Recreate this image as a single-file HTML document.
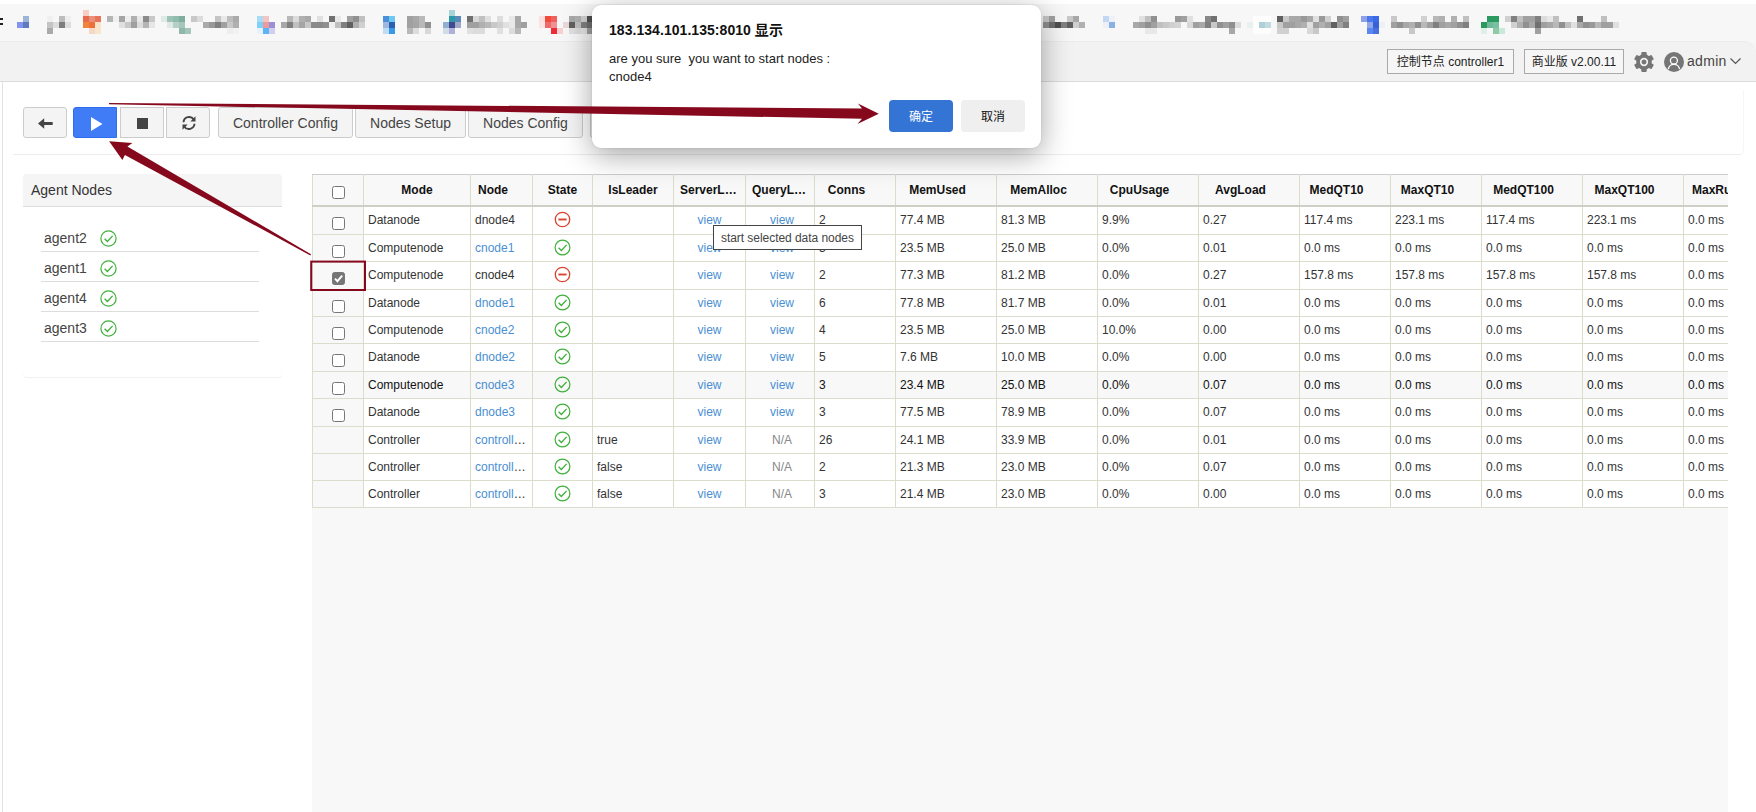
<!DOCTYPE html>
<html lang="en">
<head>
<meta charset="utf-8">
<title>Cluster Manager</title>
<style>
*{box-sizing:border-box}
html,body{margin:0;padding:0}
body{width:1756px;height:812px;overflow:hidden;background:#fff;position:relative;font-family:"Liberation Sans","Noto Sans CJK SC",sans-serif;color:#333;font-size:12px}
.abs{position:absolute}
#bm{left:0;top:4px;width:1756px;height:52px;background:#f7f7f7}
#hdr{left:0;top:41px;width:1756px;height:41px;background:#f2f2f2;border-bottom:1px solid #dcdcdc;border-top:1px solid #ececec;border-top-right-radius:12px}
#leftline{left:2px;top:82px;width:1px;height:730px;background:#e2e2e2}
.hbox{top:49px;height:25px;border:1px solid #a9a9a9;background:#f6f6f6;color:#222;font-size:12px;line-height:24px;text-align:center;white-space:nowrap}
.btn{top:107px;height:31px;border:1px solid #ccc;background:#f4f4f4;border-radius:3px;color:#444;font-size:14px;line-height:30px;text-align:center;white-space:nowrap}
#hr1{left:13px;top:90px;width:1731px;height:65px;border-bottom:1px solid #ececec;border-right:1px solid #f6f6f6;border-bottom-right-radius:5px}
/* left panel */
#lp{left:23px;top:174px;width:259px;height:203px;border-radius:4px;box-shadow:0 1px 1px rgba(0,0,0,.06)}
#lph{left:0;top:0;width:259px;height:33px;background:#f5f5f5;border-bottom:1px solid #ddd;border-radius:4px 4px 0 0;font-size:14px;line-height:32px;padding-left:8px;color:#333}
.ag{left:18px;width:218px;height:30px;border-bottom:1px solid #ddd;font-size:14px;line-height:32px;padding-left:3px;color:#444}
.ag svg{position:absolute;left:59px;top:8px}
/* grid */
#gridwrap{left:312px;top:174px;width:1416px;height:638px;background:#f8f8f8;overflow:hidden}
table{border-collapse:collapse;table-layout:fixed;position:absolute;left:0;top:0;width:1472px}
th,td{border:1px solid #dcdccc;padding:0 4px;font-size:12px;white-space:nowrap;overflow:hidden;text-overflow:ellipsis;text-align:left;color:#333;background:#fff;font-weight:normal}
th{background:#f8f8f8;font-weight:bold;text-align:center;color:#111;height:31px;padding:0 8px;border-top:1px solid #cdcdcd;border-bottom:2px solid #cfcfc6}
td.c0,th.c0{background:#f8f8f8;text-align:center;padding:0}
td.ctr{text-align:center}
td.q{padding-left:8px}
th.s{padding-right:25px}
th .cb{top:2px}
a{color:#4a8fd2;text-decoration:none}
.na{color:#888}
.cb{display:inline-block;width:13px;height:13px;border:1px solid #767676;border-radius:2.5px;background:#fff;vertical-align:middle;position:relative;top:3px}
.cb.on{background:#767676;border-color:#767676}
tr.hl td{background:#f8f8f8;color:#111}
tr.p1 td{padding-bottom:1px}
td svg{vertical-align:middle;position:relative;top:-1px}
#tip{left:713px;top:225px;width:149px;height:25px;background:#fff;border:1px solid #444;font-size:12px;line-height:24px;padding-left:7px;color:#444;white-space:nowrap;letter-spacing:-.05px}
/* dialog */
#dlg{left:592px;top:5px;width:449px;height:143px;background:#fff;border-radius:9px;box-shadow:0 7px 30px rgba(0,0,0,.36),0 0 2px rgba(0,0,0,.12)}
#dt{left:17px;top:16px;font-size:14px;font-weight:bold;color:#111;line-height:18px;white-space:nowrap;letter-spacing:.05px}
#dm{left:17px;top:45px;font-size:13px;color:#222;line-height:18px;white-space:pre}
.db{top:95px;width:64px;height:32px;border-radius:4px;font-size:12px;line-height:34px;text-align:center}
</style>
</head>
<body>
<div id="bm" class="abs"></div>
<svg class="abs" style="left:0;top:0" width="1756" height="41" viewBox="0 0 1756 41" shape-rendering="crispEdges"><rect x="0" y="18" width="3" height="2" fill="#222"/><rect x="0" y="23" width="3" height="2" fill="#222"/><rect x="23" y="16" width="6" height="6" fill="#9cb5d6"/><rect x="17" y="22" width="6" height="6" fill="#8294f0"/><rect x="23" y="22" width="6" height="6" fill="#5f7abf"/><rect x="47" y="16" width="6" height="6" fill="#f0f0f0"/><rect x="59" y="16" width="6" height="6" fill="#bdbdbd"/><rect x="65" y="16" width="6" height="6" fill="#eeeeee"/><rect x="47" y="22" width="6" height="6" fill="#c4c4c4"/><rect x="53" y="22" width="6" height="6" fill="#dddddd"/><rect x="59" y="22" width="6" height="6" fill="#7d7d7d"/><rect x="65" y="22" width="6" height="6" fill="#dddddd"/><rect x="47" y="28" width="6" height="6" fill="#aaaaaa"/><rect x="83" y="10" width="6" height="6" fill="#f5cfc4"/><rect x="83" y="16" width="6" height="6" fill="#e8684a"/><rect x="89" y="16" width="6" height="6" fill="#ea8f7a"/><rect x="95" y="16" width="6" height="6" fill="#e8745a"/><rect x="83" y="22" width="6" height="6" fill="#f0843c"/><rect x="89" y="22" width="6" height="6" fill="#ee6f3c"/><rect x="95" y="22" width="6" height="6" fill="#f8e4c8"/><rect x="89" y="28" width="6" height="6" fill="#f6d9c4"/><rect x="95" y="28" width="6" height="6" fill="#f8e6cc"/><rect x="107" y="16" width="6" height="6" fill="#b5b5b5"/><rect x="113" y="16" width="6" height="6" fill="#f0f0f0"/><rect x="119" y="16" width="6" height="6" fill="#a5a5a5"/><rect x="125" y="16" width="6" height="6" fill="#eeeeee"/><rect x="131" y="16" width="6" height="6" fill="#b0b0b0"/><rect x="137" y="16" width="6" height="6" fill="#e8e8e8"/><rect x="143" y="16" width="6" height="6" fill="#8a8a8a"/><rect x="149" y="16" width="6" height="6" fill="#c8c8c8"/><rect x="119" y="22" width="6" height="6" fill="#e0e0e0"/><rect x="125" y="22" width="6" height="6" fill="#c8c8c8"/><rect x="131" y="22" width="6" height="6" fill="#a0a0a0"/><rect x="137" y="22" width="6" height="6" fill="#dcdcdc"/><rect x="143" y="22" width="6" height="6" fill="#b5b5b5"/><rect x="149" y="22" width="6" height="6" fill="#e6e6e6"/><rect x="161" y="16" width="6" height="6" fill="#dfeae6"/><rect x="167" y="16" width="6" height="6" fill="#9cc4b6"/><rect x="173" y="16" width="6" height="6" fill="#8fbcae"/><rect x="179" y="16" width="6" height="6" fill="#7fae9f"/><rect x="167" y="22" width="6" height="6" fill="#dfe9e5"/><rect x="173" y="22" width="6" height="6" fill="#b5d0c7"/><rect x="179" y="22" width="6" height="6" fill="#a5c6bb"/><rect x="179" y="28" width="6" height="6" fill="#8fb8ab"/><rect x="185" y="28" width="6" height="6" fill="#a5c4ba"/><rect x="191" y="16" width="6" height="6" fill="#c8c8c8"/><rect x="197" y="16" width="6" height="6" fill="#dcdcdc"/><rect x="215" y="16" width="6" height="6" fill="#c4c4c4"/><rect x="221" y="16" width="6" height="6" fill="#e8e8e8"/><rect x="227" y="16" width="6" height="6" fill="#bcbcbc"/><rect x="233" y="16" width="6" height="6" fill="#aaaaaa"/><rect x="203" y="22" width="6" height="6" fill="#aaaaaa"/><rect x="209" y="22" width="6" height="6" fill="#999999"/><rect x="215" y="22" width="6" height="6" fill="#808080"/><rect x="221" y="22" width="6" height="6" fill="#a0a0a0"/><rect x="227" y="22" width="6" height="6" fill="#c8c8c8"/><rect x="233" y="22" width="6" height="6" fill="#b0b0b0"/><rect x="227" y="28" width="6" height="6" fill="#eeeeee"/><rect x="233" y="28" width="6" height="6" fill="#f2f2f2"/><rect x="257" y="16" width="6" height="6" fill="#a8dcf5"/><rect x="263" y="16" width="6" height="6" fill="#f5c4c0"/><rect x="257" y="22" width="6" height="6" fill="#7fd0f8"/><rect x="263" y="22" width="6" height="6" fill="#ea9a9a"/><rect x="269" y="22" width="6" height="6" fill="#9a90d8"/><rect x="257" y="28" width="6" height="6" fill="#e8f2fa"/><rect x="263" y="28" width="6" height="6" fill="#5ab4f5"/><rect x="269" y="28" width="6" height="6" fill="#d0d0ee"/><rect x="287" y="16" width="6" height="6" fill="#b8b8b8"/><rect x="293" y="16" width="6" height="6" fill="#dcdcdc"/><rect x="299" y="16" width="6" height="6" fill="#b0b0b0"/><rect x="305" y="16" width="6" height="6" fill="#a8a8a8"/><rect x="317" y="16" width="6" height="6" fill="#e0e0e0"/><rect x="329" y="16" width="6" height="6" fill="#707070"/><rect x="335" y="16" width="6" height="6" fill="#e8e8e8"/><rect x="347" y="16" width="6" height="6" fill="#a0a0a0"/><rect x="353" y="16" width="6" height="6" fill="#909090"/><rect x="359" y="16" width="6" height="6" fill="#c0c0c0"/><rect x="281" y="22" width="6" height="6" fill="#a8a8a8"/><rect x="287" y="22" width="6" height="6" fill="#808080"/><rect x="293" y="22" width="6" height="6" fill="#c0c0c0"/><rect x="299" y="22" width="6" height="6" fill="#a5a5a5"/><rect x="305" y="22" width="6" height="6" fill="#c8c8c8"/><rect x="311" y="22" width="6" height="6" fill="#8a8a8a"/><rect x="317" y="22" width="6" height="6" fill="#8a8a8a"/><rect x="323" y="22" width="6" height="6" fill="#909090"/><rect x="329" y="22" width="6" height="6" fill="#f0f0f0"/><rect x="335" y="22" width="6" height="6" fill="#c0c0c0"/><rect x="341" y="22" width="6" height="6" fill="#808080"/><rect x="347" y="22" width="6" height="6" fill="#606060"/><rect x="353" y="22" width="6" height="6" fill="#b0b0b0"/><rect x="359" y="22" width="6" height="6" fill="#d0d0d0"/><rect x="383" y="16" width="6" height="6" fill="#4a90d8"/><rect x="389" y="16" width="6" height="6" fill="#6ccaf0"/><rect x="383" y="22" width="6" height="6" fill="#a0b8e0"/><rect x="389" y="22" width="6" height="6" fill="#2a60b0"/><rect x="383" y="28" width="6" height="6" fill="#c0dcf5"/><rect x="389" y="28" width="6" height="6" fill="#3a98e8"/><rect x="407" y="16" width="6" height="6" fill="#a0a0a0"/><rect x="413" y="16" width="6" height="6" fill="#a8a8a8"/><rect x="419" y="16" width="6" height="6" fill="#b8b8b8"/><rect x="407" y="22" width="6" height="6" fill="#a0a0a0"/><rect x="413" y="22" width="6" height="6" fill="#a5a5a5"/><rect x="419" y="22" width="6" height="6" fill="#b8b8b8"/><rect x="425" y="22" width="6" height="6" fill="#909090"/><rect x="407" y="28" width="6" height="6" fill="#b8b8b8"/><rect x="413" y="28" width="6" height="6" fill="#dcdcdc"/><rect x="425" y="28" width="6" height="6" fill="#d8d8d8"/><rect x="449" y="10" width="6" height="6" fill="#a8d4d8"/><rect x="449" y="16" width="6" height="6" fill="#2a9aa8"/><rect x="455" y="16" width="6" height="6" fill="#5a88b8"/><rect x="443" y="22" width="6" height="6" fill="#90b0d0"/><rect x="449" y="22" width="6" height="6" fill="#404890"/><rect x="455" y="22" width="6" height="6" fill="#a0a8c8"/><rect x="443" y="28" width="6" height="6" fill="#d0dce8"/><rect x="449" y="28" width="6" height="6" fill="#b0b0d8"/><rect x="467" y="16" width="6" height="6" fill="#707070"/><rect x="473" y="16" width="6" height="6" fill="#d8d8d8"/><rect x="479" y="16" width="6" height="6" fill="#c0c0c0"/><rect x="485" y="16" width="6" height="6" fill="#e0e0e0"/><rect x="497" y="16" width="6" height="6" fill="#dddddd"/><rect x="509" y="16" width="6" height="6" fill="#e8e8e8"/><rect x="515" y="16" width="6" height="6" fill="#a8a8a8"/><rect x="467" y="22" width="6" height="6" fill="#a0a0a0"/><rect x="473" y="22" width="6" height="6" fill="#a0a0a0"/><rect x="479" y="22" width="6" height="6" fill="#b0b0b0"/><rect x="485" y="22" width="6" height="6" fill="#b8b8b8"/><rect x="491" y="22" width="6" height="6" fill="#c8c8c8"/><rect x="497" y="22" width="6" height="6" fill="#d0d0d0"/><rect x="503" y="22" width="6" height="6" fill="#e0e0e0"/><rect x="509" y="22" width="6" height="6" fill="#e8e8e8"/><rect x="515" y="22" width="6" height="6" fill="#a8a8a8"/><rect x="521" y="22" width="6" height="6" fill="#a0a0a0"/><rect x="467" y="28" width="6" height="6" fill="#e0e0e0"/><rect x="473" y="28" width="6" height="6" fill="#dcdcdc"/><rect x="479" y="28" width="6" height="6" fill="#dcdcdc"/><rect x="497" y="28" width="6" height="6" fill="#e0e0e0"/><rect x="509" y="28" width="6" height="6" fill="#dcdcdc"/><rect x="515" y="28" width="6" height="6" fill="#b8b8b8"/><rect x="539" y="16" width="6" height="6" fill="#fce0e0"/><rect x="545" y="16" width="6" height="6" fill="#f04a3a"/><rect x="551" y="16" width="6" height="6" fill="#f06060"/><rect x="539" y="22" width="6" height="6" fill="#fce4e4"/><rect x="545" y="22" width="6" height="6" fill="#ee6a6a"/><rect x="551" y="22" width="6" height="6" fill="#f09090"/><rect x="563" y="22" width="6" height="6" fill="#e8d8d8"/><rect x="551" y="28" width="6" height="6" fill="#ee2a3a"/><rect x="557" y="28" width="6" height="6" fill="#f8d0d0"/><rect x="569" y="16" width="6" height="6" fill="#a8a8a8"/><rect x="575" y="16" width="6" height="6" fill="#b0b0b0"/><rect x="581" y="16" width="6" height="6" fill="#d0d0d0"/><rect x="587" y="16" width="6" height="6" fill="#505050"/><rect x="569" y="22" width="6" height="6" fill="#606060"/><rect x="575" y="22" width="6" height="6" fill="#c0c0c0"/><rect x="581" y="22" width="6" height="6" fill="#808080"/><rect x="587" y="22" width="6" height="6" fill="#707070"/><rect x="569" y="28" width="6" height="6" fill="#e0e0e0"/><rect x="575" y="28" width="6" height="6" fill="#dcdcdc"/><rect x="581" y="28" width="6" height="6" fill="#e4e4e4"/><rect x="587" y="28" width="6" height="6" fill="#a0a0a0"/><rect x="1043" y="16" width="6" height="6" fill="#c8c8c8"/><rect x="1049" y="16" width="6" height="6" fill="#a0a0a0"/><rect x="1067" y="16" width="6" height="6" fill="#c8c8c8"/><rect x="1073" y="16" width="6" height="6" fill="#a8a8a8"/><rect x="1043" y="22" width="6" height="6" fill="#909090"/><rect x="1049" y="22" width="6" height="6" fill="#707070"/><rect x="1055" y="22" width="6" height="6" fill="#505050"/><rect x="1061" y="22" width="6" height="6" fill="#808080"/><rect x="1067" y="22" width="6" height="6" fill="#606060"/><rect x="1073" y="22" width="6" height="6" fill="#d0d0d0"/><rect x="1079" y="22" width="6" height="6" fill="#b0b0b0"/><rect x="1103" y="16" width="6" height="6" fill="#c0d8f5"/><rect x="1109" y="16" width="6" height="6" fill="#eef2f8"/><rect x="1103" y="22" width="6" height="6" fill="#eef0f8"/><rect x="1109" y="22" width="6" height="6" fill="#8ab0e8"/><rect x="1139" y="16" width="6" height="6" fill="#e0e0e0"/><rect x="1145" y="16" width="6" height="6" fill="#c0c0c0"/><rect x="1151" y="16" width="6" height="6" fill="#909090"/><rect x="1175" y="16" width="6" height="6" fill="#999999"/><rect x="1181" y="16" width="6" height="6" fill="#a0a0a0"/><rect x="1187" y="16" width="6" height="6" fill="#e0e0e0"/><rect x="1205" y="16" width="6" height="6" fill="#888888"/><rect x="1211" y="16" width="6" height="6" fill="#707070"/><rect x="1133" y="22" width="6" height="6" fill="#a8a8a8"/><rect x="1139" y="22" width="6" height="6" fill="#a0a0a0"/><rect x="1145" y="22" width="6" height="6" fill="#909090"/><rect x="1151" y="22" width="6" height="6" fill="#a0a0a0"/><rect x="1157" y="22" width="6" height="6" fill="#c0c0c0"/><rect x="1163" y="22" width="6" height="6" fill="#c8c8c8"/><rect x="1169" y="22" width="6" height="6" fill="#d0d0d0"/><rect x="1175" y="22" width="6" height="6" fill="#d4d4d4"/><rect x="1187" y="22" width="6" height="6" fill="#d8d8d8"/><rect x="1193" y="22" width="6" height="6" fill="#a0a0a0"/><rect x="1199" y="22" width="6" height="6" fill="#a8a8a8"/><rect x="1205" y="22" width="6" height="6" fill="#808080"/><rect x="1211" y="22" width="6" height="6" fill="#c8c8c8"/><rect x="1217" y="22" width="6" height="6" fill="#909090"/><rect x="1223" y="22" width="6" height="6" fill="#a0a0a0"/><rect x="1229" y="22" width="6" height="6" fill="#909090"/><rect x="1235" y="22" width="6" height="6" fill="#dcdcdc"/><rect x="1145" y="28" width="6" height="6" fill="#e8e8e8"/><rect x="1151" y="28" width="6" height="6" fill="#e8e8e8"/><rect x="1229" y="28" width="6" height="6" fill="#a8a8a8"/><rect x="1253" y="16" width="6" height="6" fill="#fdfdfd"/><rect x="1259" y="16" width="6" height="6" fill="#fdfdfd"/><rect x="1265" y="16" width="6" height="6" fill="#fdfdfd"/><rect x="1253" y="22" width="6" height="6" fill="#fdfdfd"/><rect x="1259" y="22" width="6" height="6" fill="#fdfdfd"/><rect x="1265" y="22" width="6" height="6" fill="#fdfdfd"/><rect x="1253" y="28" width="6" height="6" fill="#fdfdfd"/><rect x="1259" y="28" width="6" height="6" fill="#fdfdfd"/><rect x="1265" y="28" width="6" height="6" fill="#fdfdfd"/><rect x="1247" y="22" width="6" height="6" fill="#e8f0f0"/><rect x="1259" y="22" width="6" height="6" fill="#b0d0d8"/><rect x="1265" y="22" width="6" height="6" fill="#c0dce0"/><rect x="1277" y="16" width="6" height="6" fill="#606060"/><rect x="1283" y="16" width="6" height="6" fill="#c8c8c8"/><rect x="1289" y="16" width="6" height="6" fill="#a8a8a8"/><rect x="1295" y="16" width="6" height="6" fill="#a8a8a8"/><rect x="1301" y="16" width="6" height="6" fill="#999999"/><rect x="1307" y="16" width="6" height="6" fill="#a8a8a8"/><rect x="1313" y="16" width="6" height="6" fill="#e0e0e0"/><rect x="1319" y="16" width="6" height="6" fill="#999999"/><rect x="1325" y="16" width="6" height="6" fill="#d0d0d0"/><rect x="1337" y="16" width="6" height="6" fill="#909090"/><rect x="1343" y="16" width="6" height="6" fill="#a0a0a0"/><rect x="1277" y="22" width="6" height="6" fill="#c8c8c8"/><rect x="1283" y="22" width="6" height="6" fill="#a0a0a0"/><rect x="1289" y="22" width="6" height="6" fill="#a0a0a0"/><rect x="1295" y="22" width="6" height="6" fill="#a8a8a8"/><rect x="1301" y="22" width="6" height="6" fill="#b0b0b0"/><rect x="1307" y="22" width="6" height="6" fill="#e0e0e0"/><rect x="1313" y="22" width="6" height="6" fill="#a0a0a0"/><rect x="1319" y="22" width="6" height="6" fill="#b0b0b0"/><rect x="1325" y="22" width="6" height="6" fill="#a0a0a0"/><rect x="1331" y="22" width="6" height="6" fill="#606060"/><rect x="1337" y="22" width="6" height="6" fill="#a0a0a0"/><rect x="1343" y="22" width="6" height="6" fill="#808080"/><rect x="1277" y="28" width="6" height="6" fill="#d0d0d0"/><rect x="1283" y="28" width="6" height="6" fill="#d0d0d0"/><rect x="1307" y="28" width="6" height="6" fill="#d8d8d8"/><rect x="1313" y="28" width="6" height="6" fill="#c8c8c8"/><rect x="1361" y="16" width="6" height="6" fill="#90a0e8"/><rect x="1367" y="16" width="6" height="6" fill="#4a78e8"/><rect x="1373" y="16" width="6" height="6" fill="#3a6ae8"/><rect x="1367" y="22" width="6" height="6" fill="#90a8e8"/><rect x="1373" y="22" width="6" height="6" fill="#3a60d8"/><rect x="1379" y="22" width="6" height="6" fill="#eef0f8"/><rect x="1367" y="28" width="6" height="6" fill="#5a88f0"/><rect x="1373" y="28" width="6" height="6" fill="#4a70e0"/><rect x="1391" y="16" width="6" height="6" fill="#c8c8c8"/><rect x="1421" y="16" width="6" height="6" fill="#d0d0d0"/><rect x="1433" y="16" width="6" height="6" fill="#b8b8b8"/><rect x="1439" y="16" width="6" height="6" fill="#b0b0b0"/><rect x="1451" y="16" width="6" height="6" fill="#b0b0b0"/><rect x="1463" y="16" width="6" height="6" fill="#c0c0c0"/><rect x="1391" y="22" width="6" height="6" fill="#a0a0a0"/><rect x="1397" y="22" width="6" height="6" fill="#909090"/><rect x="1403" y="22" width="6" height="6" fill="#a8a8a8"/><rect x="1409" y="22" width="6" height="6" fill="#b0b0b0"/><rect x="1415" y="22" width="6" height="6" fill="#909090"/><rect x="1421" y="22" width="6" height="6" fill="#b8b8b8"/><rect x="1427" y="22" width="6" height="6" fill="#a0a0a0"/><rect x="1433" y="22" width="6" height="6" fill="#808080"/><rect x="1439" y="22" width="6" height="6" fill="#a0a0a0"/><rect x="1445" y="22" width="6" height="6" fill="#a8a8a8"/><rect x="1451" y="22" width="6" height="6" fill="#a0a0a0"/><rect x="1457" y="22" width="6" height="6" fill="#909090"/><rect x="1463" y="22" width="6" height="6" fill="#808080"/><rect x="1409" y="28" width="6" height="6" fill="#c8c8c8"/><rect x="1487" y="16" width="6" height="6" fill="#2a9a60"/><rect x="1493" y="16" width="6" height="6" fill="#2a9a60"/><rect x="1481" y="22" width="6" height="6" fill="#2a9a5a"/><rect x="1487" y="22" width="6" height="6" fill="#70b898"/><rect x="1493" y="22" width="6" height="6" fill="#78c0a0"/><rect x="1481" y="28" width="6" height="6" fill="#e0f0e8"/><rect x="1493" y="28" width="6" height="6" fill="#90c8a8"/><rect x="1499" y="28" width="6" height="6" fill="#c8e8d8"/><rect x="1505" y="16" width="6" height="6" fill="#d0d0d0"/><rect x="1511" y="16" width="6" height="6" fill="#808080"/><rect x="1517" y="16" width="6" height="6" fill="#c0c0c0"/><rect x="1523" y="16" width="6" height="6" fill="#a0a0a0"/><rect x="1529" y="16" width="6" height="6" fill="#a0a0a0"/><rect x="1535" y="16" width="6" height="6" fill="#808080"/><rect x="1541" y="16" width="6" height="6" fill="#dcdcdc"/><rect x="1547" y="16" width="6" height="6" fill="#e8e8e8"/><rect x="1553" y="16" width="6" height="6" fill="#c0c0c0"/><rect x="1577" y="16" width="6" height="6" fill="#707070"/><rect x="1601" y="16" width="6" height="6" fill="#c0c0c0"/><rect x="1511" y="22" width="6" height="6" fill="#d0d0d0"/><rect x="1517" y="22" width="6" height="6" fill="#b0b0b0"/><rect x="1523" y="22" width="6" height="6" fill="#909090"/><rect x="1529" y="22" width="6" height="6" fill="#a8a8a8"/><rect x="1535" y="22" width="6" height="6" fill="#707070"/><rect x="1541" y="22" width="6" height="6" fill="#a0a0a0"/><rect x="1547" y="22" width="6" height="6" fill="#a8a8a8"/><rect x="1553" y="22" width="6" height="6" fill="#b8b8b8"/><rect x="1559" y="22" width="6" height="6" fill="#909090"/><rect x="1565" y="22" width="6" height="6" fill="#c0c0c0"/><rect x="1571" y="22" width="6" height="6" fill="#e0e0e0"/><rect x="1577" y="22" width="6" height="6" fill="#a8a8a8"/><rect x="1583" y="22" width="6" height="6" fill="#909090"/><rect x="1589" y="22" width="6" height="6" fill="#999999"/><rect x="1595" y="22" width="6" height="6" fill="#b8b8b8"/><rect x="1601" y="22" width="6" height="6" fill="#a0a0a0"/><rect x="1607" y="22" width="6" height="6" fill="#a0a0a0"/><rect x="1613" y="22" width="6" height="6" fill="#e0e0e0"/><rect x="1535" y="28" width="6" height="6" fill="#a0a0a0"/></svg>
<div id="hdr" class="abs"></div>
<div id="leftline" class="abs"></div>

<!-- header right -->
<div class="abs hbox" style="left:1387px;width:127px">控制节点 controller1</div>
<div class="abs hbox" style="left:1524px;width:100px">商业版 v2.00.11</div>
<svg class="abs" style="left:1634px;top:52px" width="20" height="20" viewBox="-10 -10 20 20"><g fill="#757575"><circle r="7.8"/><rect x="-2.7" y="-10" width="5.4" height="4" rx="1" transform="rotate(0)"/><rect x="-2.7" y="-10" width="5.4" height="4" rx="1" transform="rotate(60)"/><rect x="-2.7" y="-10" width="5.4" height="4" rx="1" transform="rotate(120)"/><rect x="-2.7" y="-10" width="5.4" height="4" rx="1" transform="rotate(180)"/><rect x="-2.7" y="-10" width="5.4" height="4" rx="1" transform="rotate(240)"/><rect x="-2.7" y="-10" width="5.4" height="4" rx="1" transform="rotate(300)"/></g><circle r="3.3" fill="none" stroke="#f2f2f2" stroke-width="1.7"/></svg>
<svg class="abs" style="left:1664px;top:52px" width="20" height="20" viewBox="0 0 20 20"><circle cx="10" cy="10" r="10" fill="#757575"/><circle cx="9.900" cy="8.600" r="3.500" fill="none" stroke="#fff" stroke-width="1.300"/><path d="M4.300 17.200a5.700 5.700 0 0 1 11.300 0" fill="none" stroke="#fff" stroke-width="1.300"/></svg>
<div class="abs" style="left:1687px;top:51px;font-size:14px;line-height:20px;color:#444;letter-spacing:.3px">admin</div>
<svg class="abs" style="left:1730px;top:57px" width="11" height="9" viewBox="0 0 11 9"><path d="M.5 1.500l5 5 5-5" fill="none" stroke="#555" stroke-width="1.200"/></svg>

<!-- toolbar -->
<div class="abs btn" style="left:23px;width:44px"><svg width="15" height="11" viewBox="0 0 15 11" style="position:absolute;left:14px;top:10px"><path fill="#444" d="M0 5.500l6.200-5.300v3.700H14.700v3.200H6.200v3.700z"/></svg></div>
<div class="abs btn" style="left:73px;width:44px;background:#3f7cf6;border-color:#2f6df0;border-radius:3px 0 0 3px"><svg width="12" height="14" viewBox="0 0 12 14" style="position:absolute;left:17px;top:9px"><path fill="#fff" d="M0 0l11.500 7L0 14z"/></svg></div>
<div class="abs btn" style="left:120px;width:44px;border-radius:0"><div style="position:absolute;left:16px;top:10px;width:11px;height:11px;background:#444"></div></div>
<div class="abs btn" style="left:166px;width:44px;border-radius:0 3px 3px 0"><svg width="14" height="14" viewBox="0 0 14 14" style="position:absolute;left:15px;top:8px"><g fill="none" stroke="#444" stroke-width="1.900"><path d="M1.500 6.200A5.600 5.600 0 0 1 11.800 3.600"/><path d="M12.500 7.800A5.600 5.600 0 0 1 2.200 10.400"/></g><path fill="#444" d="M13.500 .3v5.200H8.300z"/><path fill="#444" d="M.5 13.700V8.500h5.200z"/></svg></div>
<div class="abs btn" style="left:218px;width:135px">Controller Config</div>
<div class="abs btn" style="left:355px;width:111px">Nodes Setup</div>
<div class="abs btn" style="left:468px;width:115px">Nodes Config</div>
<div class="abs btn" style="left:590px;width:90px"></div>
<div id="hr1" class="abs"></div>

<!-- left panel -->
<div id="lp" class="abs">
  <div id="lph" class="abs">Agent Nodes</div>
  <div class="abs ag" style="top:48px">agent2<svg width="17" height="17" viewBox="0 0 17 17"><circle cx="8.500" cy="8.500" r="7.600" fill="none" stroke="#3fb03a" stroke-width="1.200"/><path d="M4.600 8.700l2.800 2.800 5.200-5.600" fill="none" stroke="#3fb03a" stroke-width="1.300"/></svg></div>
  <div class="abs ag" style="top:78px">agent1<svg width="17" height="17" viewBox="0 0 17 17"><circle cx="8.500" cy="8.500" r="7.600" fill="none" stroke="#3fb03a" stroke-width="1.200"/><path d="M4.600 8.700l2.800 2.800 5.200-5.600" fill="none" stroke="#3fb03a" stroke-width="1.300"/></svg></div>
  <div class="abs ag" style="top:108px">agent4<svg width="17" height="17" viewBox="0 0 17 17"><circle cx="8.500" cy="8.500" r="7.600" fill="none" stroke="#3fb03a" stroke-width="1.200"/><path d="M4.600 8.700l2.800 2.800 5.200-5.600" fill="none" stroke="#3fb03a" stroke-width="1.300"/></svg></div>
  <div class="abs ag" style="top:138px">agent3<svg width="17" height="17" viewBox="0 0 17 17"><circle cx="8.500" cy="8.500" r="7.600" fill="none" stroke="#3fb03a" stroke-width="1.200"/><path d="M4.600 8.700l2.800 2.800 5.200-5.600" fill="none" stroke="#3fb03a" stroke-width="1.300"/></svg></div>
</div>

<!-- grid -->
<div id="gridwrap" class="abs">
<table><colgroup><col style="width:51px"><col style="width:107px"><col style="width:62px"><col style="width:60px"><col style="width:81px"><col style="width:72px"><col style="width:69px"><col style="width:81px"><col style="width:101px"><col style="width:101px"><col style="width:101px"><col style="width:101px"><col style="width:91px"><col style="width:91px"><col style="width:101px"><col style="width:101px"><col style="width:101px"></colgroup><thead><tr><th class="c0"><span class="cb"></span></th><th>Mode</th><th style="text-align:left;padding:0 0 0 7px">Node</th><th>State</th><th>IsLeader</th><th style="padding:0 6px">ServerLog</th><th style="padding:0 6px">QueryLog</th><th class="s">Conns</th><th class="s">MemUsed</th><th class="s">MemAlloc</th><th class="s">CpuUsage</th><th class="s">AvgLoad</th><th class="s">MedQT10</th><th class="s">MaxQT10</th><th class="s">MedQT100</th><th class="s">MaxQT100</th><th class="s">MaxRunningQT</th></tr></thead><tbody><tr style="height:29px"><td class="c0"><span class="cb"></span></td><td>Datanode</td><td>dnode4</td><td class="ctr"><svg width="17" height="17" viewBox="0 0 17 17"><circle cx="8.5" cy="8.5" r="7.2" fill="none" stroke="#d8452f" stroke-width="1.3"/><path d="M4.4 8.5h8.2" fill="none" stroke="#d8452f" stroke-width="1.9"/></svg></td><td></td><td class="ctr"><a>view</a></td><td class="ctr q"><a>view</a></td><td>2</td><td>77.4 MB</td><td>81.3 MB</td><td>9.9%</td><td>0.27</td><td>117.4 ms</td><td>223.1 ms</td><td>117.4 ms</td><td>223.1 ms</td><td>0.0 ms</td></tr>
<tr style="height:27px"><td class="c0"><span class="cb"></span></td><td>Computenode</td><td><a>cnode1</a></td><td class="ctr"><svg width="17" height="17" viewBox="0 0 17 17"><circle cx="8.5" cy="8.5" r="7.4" fill="none" stroke="#3fb03a" stroke-width="1.2"/><path d="M4.6 8.7l2.8 2.8 5.2-5.6" fill="none" stroke="#3fb03a" stroke-width="1.3"/></svg></td><td></td><td class="ctr"><a>view</a></td><td class="ctr q"><a>view</a></td><td>3</td><td>23.5 MB</td><td>25.0 MB</td><td>0.0%</td><td>0.01</td><td>0.0 ms</td><td>0.0 ms</td><td>0.0 ms</td><td>0.0 ms</td><td>0.0 ms</td></tr>
<tr class="p1" style="height:28px"><td class="c0"><span class="cb on"><svg width="11" height="11" viewBox="0 0 11 11" style="position:absolute;left:0;top:0"><path d="M2 5.6l2.4 2.6 4.8-5.6" fill="none" stroke="#fff" stroke-width="1.9"/></svg></span></td><td>Computenode</td><td>cnode4</td><td class="ctr"><svg width="17" height="17" viewBox="0 0 17 17"><circle cx="8.5" cy="8.5" r="7.2" fill="none" stroke="#d8452f" stroke-width="1.3"/><path d="M4.4 8.5h8.2" fill="none" stroke="#d8452f" stroke-width="1.9"/></svg></td><td></td><td class="ctr"><a>view</a></td><td class="ctr q"><a>view</a></td><td>2</td><td>77.3 MB</td><td>81.2 MB</td><td>0.0%</td><td>0.27</td><td>157.8 ms</td><td>157.8 ms</td><td>157.8 ms</td><td>157.8 ms</td><td>0.0 ms</td></tr>
<tr style="height:27px"><td class="c0"><span class="cb"></span></td><td>Datanode</td><td><a>dnode1</a></td><td class="ctr"><svg width="17" height="17" viewBox="0 0 17 17"><circle cx="8.5" cy="8.5" r="7.4" fill="none" stroke="#3fb03a" stroke-width="1.2"/><path d="M4.6 8.7l2.8 2.8 5.2-5.6" fill="none" stroke="#3fb03a" stroke-width="1.3"/></svg></td><td></td><td class="ctr"><a>view</a></td><td class="ctr q"><a>view</a></td><td>6</td><td>77.8 MB</td><td>81.7 MB</td><td>0.0%</td><td>0.01</td><td>0.0 ms</td><td>0.0 ms</td><td>0.0 ms</td><td>0.0 ms</td><td>0.0 ms</td></tr>
<tr style="height:27px"><td class="c0"><span class="cb"></span></td><td>Computenode</td><td><a>cnode2</a></td><td class="ctr"><svg width="17" height="17" viewBox="0 0 17 17"><circle cx="8.5" cy="8.5" r="7.4" fill="none" stroke="#3fb03a" stroke-width="1.2"/><path d="M4.6 8.7l2.8 2.8 5.2-5.6" fill="none" stroke="#3fb03a" stroke-width="1.3"/></svg></td><td></td><td class="ctr"><a>view</a></td><td class="ctr q"><a>view</a></td><td>4</td><td>23.5 MB</td><td>25.0 MB</td><td>10.0%</td><td>0.00</td><td>0.0 ms</td><td>0.0 ms</td><td>0.0 ms</td><td>0.0 ms</td><td>0.0 ms</td></tr>
<tr class="p1" style="height:28px"><td class="c0"><span class="cb"></span></td><td>Datanode</td><td><a>dnode2</a></td><td class="ctr"><svg width="17" height="17" viewBox="0 0 17 17"><circle cx="8.5" cy="8.5" r="7.4" fill="none" stroke="#3fb03a" stroke-width="1.2"/><path d="M4.6 8.7l2.8 2.8 5.2-5.6" fill="none" stroke="#3fb03a" stroke-width="1.3"/></svg></td><td></td><td class="ctr"><a>view</a></td><td class="ctr q"><a>view</a></td><td>5</td><td>7.6 MB</td><td>10.0 MB</td><td>0.0%</td><td>0.00</td><td>0.0 ms</td><td>0.0 ms</td><td>0.0 ms</td><td>0.0 ms</td><td>0.0 ms</td></tr>
<tr class="hl" style="height:27px"><td class="c0"><span class="cb"></span></td><td>Computenode</td><td><a>cnode3</a></td><td class="ctr"><svg width="17" height="17" viewBox="0 0 17 17"><circle cx="8.5" cy="8.5" r="7.4" fill="none" stroke="#3fb03a" stroke-width="1.2"/><path d="M4.6 8.7l2.8 2.8 5.2-5.6" fill="none" stroke="#3fb03a" stroke-width="1.3"/></svg></td><td></td><td class="ctr"><a>view</a></td><td class="ctr q"><a>view</a></td><td>3</td><td>23.4 MB</td><td>25.0 MB</td><td>0.0%</td><td>0.07</td><td>0.0 ms</td><td>0.0 ms</td><td>0.0 ms</td><td>0.0 ms</td><td>0.0 ms</td></tr>
<tr class="p1" style="height:28px"><td class="c0"><span class="cb"></span></td><td>Datanode</td><td><a>dnode3</a></td><td class="ctr"><svg width="17" height="17" viewBox="0 0 17 17"><circle cx="8.5" cy="8.5" r="7.4" fill="none" stroke="#3fb03a" stroke-width="1.2"/><path d="M4.6 8.7l2.8 2.8 5.2-5.6" fill="none" stroke="#3fb03a" stroke-width="1.3"/></svg></td><td></td><td class="ctr"><a>view</a></td><td class="ctr q"><a>view</a></td><td>3</td><td>77.5 MB</td><td>78.9 MB</td><td>0.0%</td><td>0.07</td><td>0.0 ms</td><td>0.0 ms</td><td>0.0 ms</td><td>0.0 ms</td><td>0.0 ms</td></tr>
<tr style="height:27px"><td class="c0"></td><td>Controller</td><td><a>controller1</a></td><td class="ctr"><svg width="17" height="17" viewBox="0 0 17 17"><circle cx="8.5" cy="8.5" r="7.4" fill="none" stroke="#3fb03a" stroke-width="1.2"/><path d="M4.6 8.7l2.8 2.8 5.2-5.6" fill="none" stroke="#3fb03a" stroke-width="1.3"/></svg></td><td>true</td><td class="ctr"><a>view</a></td><td class="ctr na q">N/A</td><td>26</td><td>24.1 MB</td><td>33.9 MB</td><td>0.0%</td><td>0.01</td><td>0.0 ms</td><td>0.0 ms</td><td>0.0 ms</td><td>0.0 ms</td><td>0.0 ms</td></tr>
<tr style="height:27px"><td class="c0"></td><td>Controller</td><td><a>controller2</a></td><td class="ctr"><svg width="17" height="17" viewBox="0 0 17 17"><circle cx="8.5" cy="8.5" r="7.4" fill="none" stroke="#3fb03a" stroke-width="1.2"/><path d="M4.6 8.7l2.8 2.8 5.2-5.6" fill="none" stroke="#3fb03a" stroke-width="1.3"/></svg></td><td>false</td><td class="ctr"><a>view</a></td><td class="ctr na q">N/A</td><td>2</td><td>21.3 MB</td><td>23.0 MB</td><td>0.0%</td><td>0.07</td><td>0.0 ms</td><td>0.0 ms</td><td>0.0 ms</td><td>0.0 ms</td><td>0.0 ms</td></tr>
<tr style="height:27px"><td class="c0"></td><td>Controller</td><td><a>controller3</a></td><td class="ctr"><svg width="17" height="17" viewBox="0 0 17 17"><circle cx="8.5" cy="8.5" r="7.4" fill="none" stroke="#3fb03a" stroke-width="1.2"/><path d="M4.6 8.7l2.8 2.8 5.2-5.6" fill="none" stroke="#3fb03a" stroke-width="1.3"/></svg></td><td>false</td><td class="ctr"><a>view</a></td><td class="ctr na q">N/A</td><td>3</td><td>21.4 MB</td><td>23.0 MB</td><td>0.0%</td><td>0.00</td><td>0.0 ms</td><td>0.0 ms</td><td>0.0 ms</td><td>0.0 ms</td><td>0.0 ms</td></tr>
</tbody></table>
</div>

<div id="tip" class="abs">start selected data nodes</div>

<!-- dialog -->
<div id="dlg" class="abs">
  <div id="dt" class="abs">183.134.101.135:8010 显示</div>
  <div id="dm" class="abs">are you sure  you want to start nodes :
cnode4</div>
  <div class="abs db" style="left:297px;background:#3474d4;color:#fff">确定</div>
  <div class="abs db" style="left:369px;background:#efefef;color:#111">取消</div>
</div>
<svg class="abs" style="left:0;top:0;pointer-events:none" width="1756" height="812" viewBox="0 0 1756 812"><rect x="311.2" y="261.6" width="53.800" height="28.400" fill="none" stroke="#85081c" stroke-width="2"/><path fill="#85081c" d="M109.1 141.3L132.4 143L127.4 146.6L311 254.2L310.4 255.4L124.9 154.9L122.4 159.9Z"/><path fill="#85081c" d="M878.8 113.8L857.9 103.5L862 108.4L109 103L109 104.3L862 118.8L857.4 124Z"/></svg>
</body>
</html>
